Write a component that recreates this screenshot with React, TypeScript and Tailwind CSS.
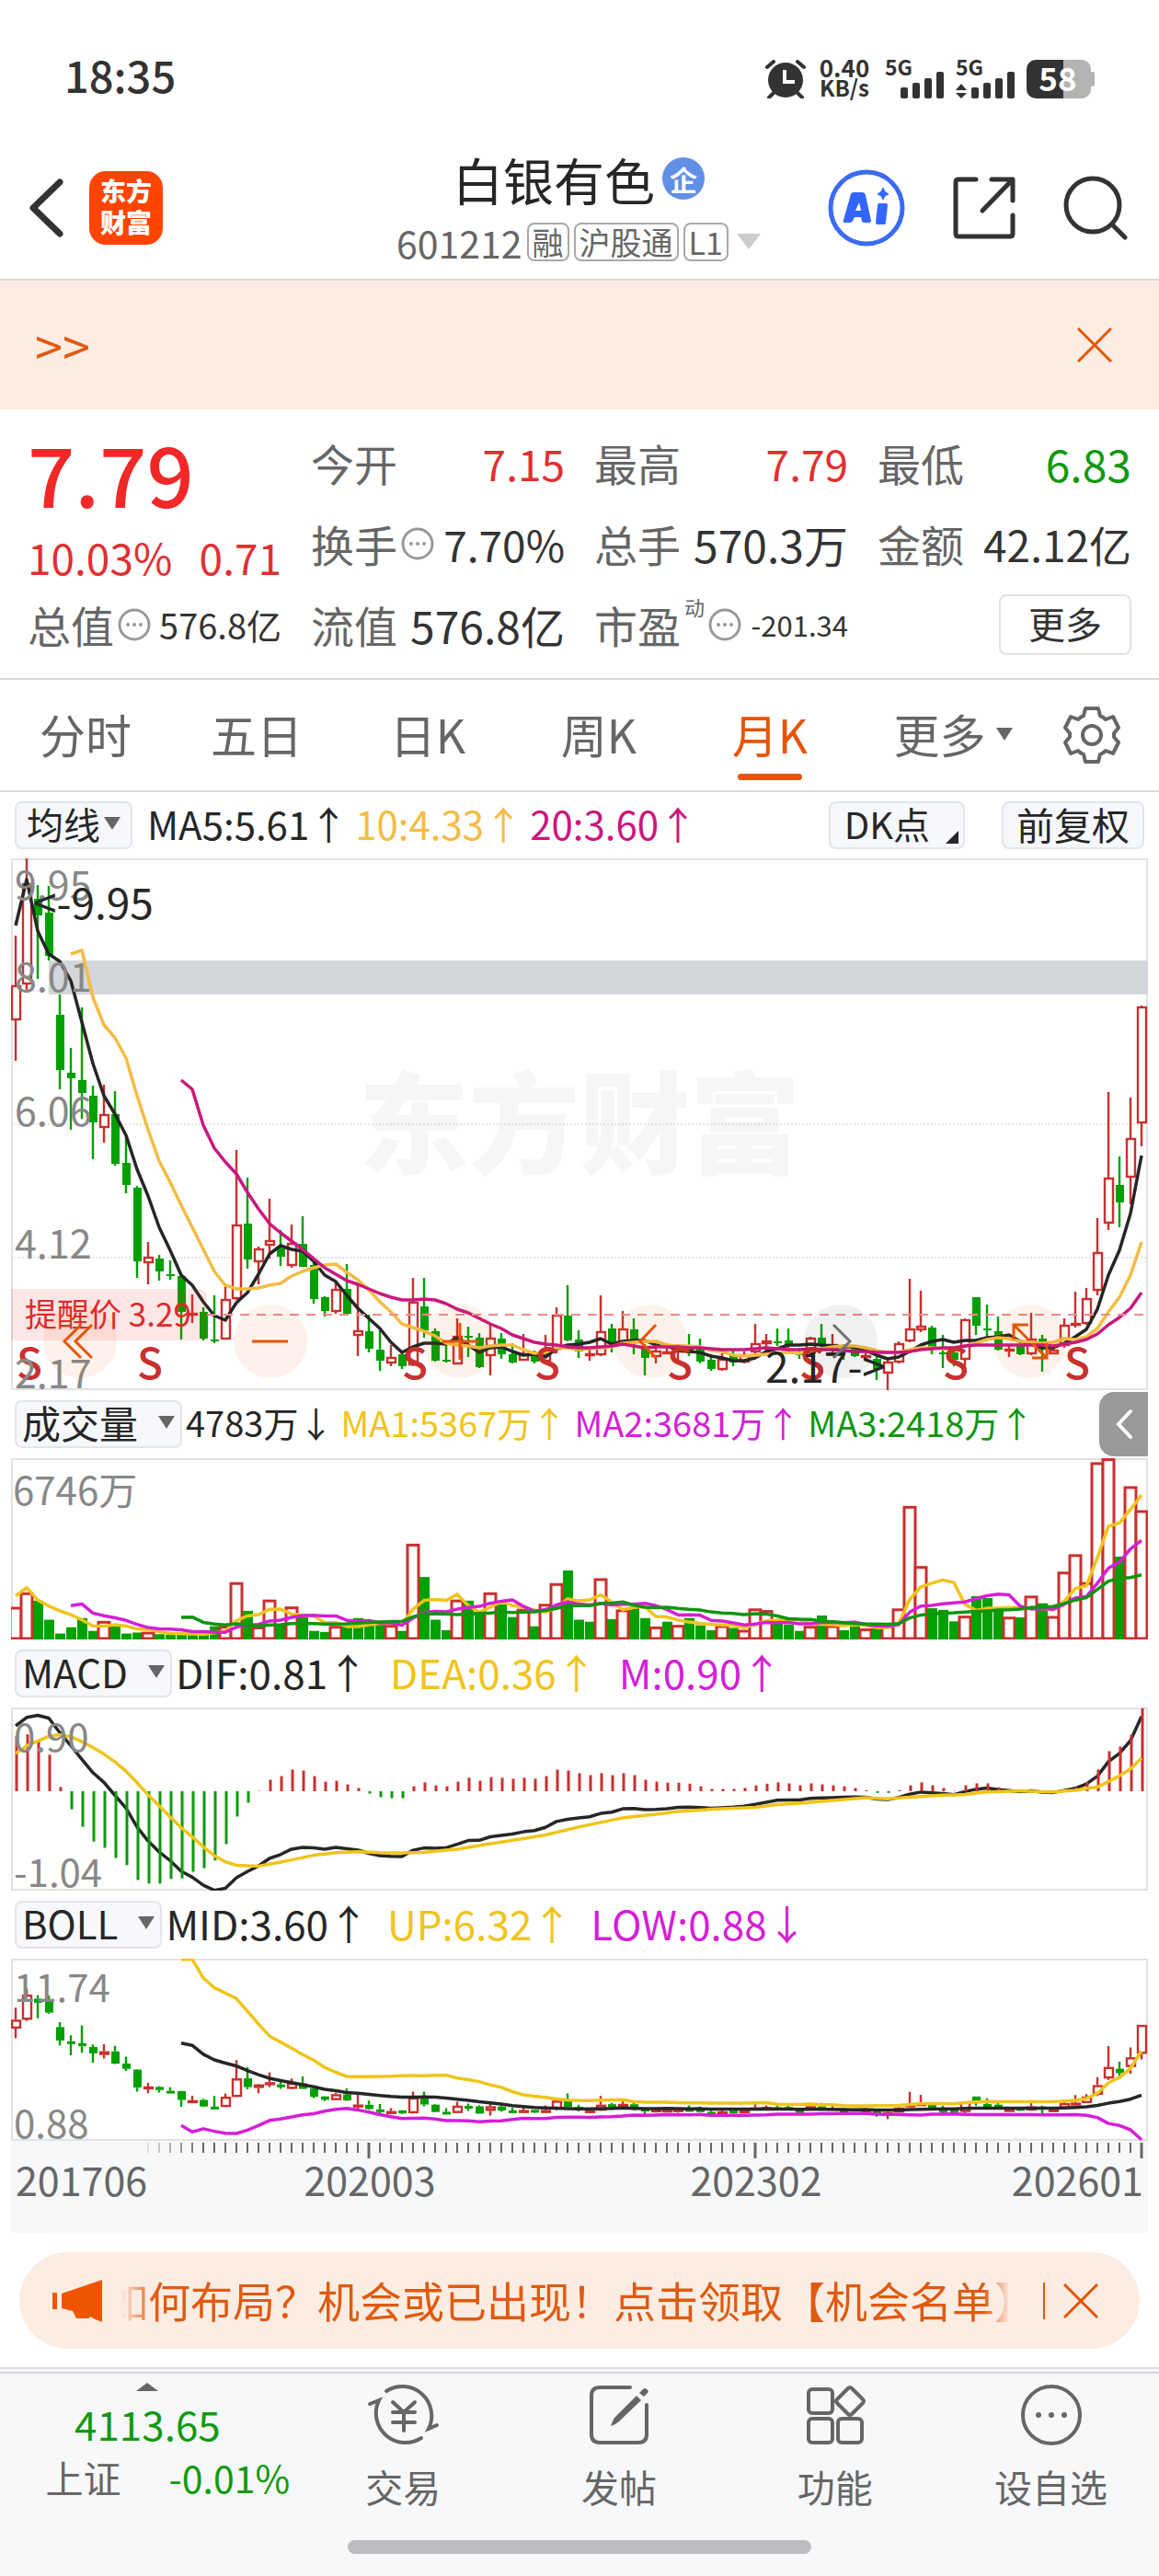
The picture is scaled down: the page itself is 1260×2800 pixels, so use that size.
import { useState } from 'react';
import type { ReactNode } from 'react';

const RED = '#c9302e';
const GREEN = '#00a000';
const BLACK = '#262626';
const YELLOW = '#f0c419';
const AMBER = '#f5bc42';
const MAGENTA = '#c9177e';
const PURPLE = '#d41fd8';
const DARK_GREEN = '#0f950f';
const ORANGE = '#e65505';

const CHART_W = 1236;
const STEP = 12;
const PRICE_H = 578;
const VOL_H = 197;
const MACD_H = 199;
const BOLL_H = 198;

// [high, body top, body bottom, low, 1 = up / 0 = down], 34 is the top of the pane and 1545 its bottom
const CANDLES: number[][] = [
  [254, 394, 494, 608, 1], [35, 104, 392, 408, 1], [110, 150, 197, 377, 0], [112, 187, 311, 325, 0],
  [421, 478, 634, 689, 0], [572, 643, 659, 806, 0], [458, 665, 700, 775, 0], [680, 709, 783, 889, 0],
  [678, 760, 800, 842, 1], [696, 760, 902, 908, 0], [822, 900, 962, 986, 0], [964, 971, 1179, 1225, 0],
  [1125, 1167, 1183, 1245, 1], [1162, 1171, 1207, 1235, 0], [1176, 1216, 1219, 1231, 0], [1218, 1220, 1322, 1402, 0],
  [1273, 1326, 1329, 1355, 1], [1309, 1322, 1398, 1405, 0], [1277, 1400, 1403, 1411, 0], [1247, 1286, 1402, 1402, 1],
  [862, 1074, 1286, 1290, 1], [942, 1071, 1174, 1199, 0], [1137, 1143, 1182, 1245, 1], [1001, 1118, 1135, 1172, 1],
  [1091, 1143, 1167, 1193, 0], [1074, 1126, 1192, 1198, 1], [1051, 1130, 1194, 1196, 0], [1182, 1190, 1285, 1299, 0],
  [1278, 1281, 1320, 1336, 0], [1240, 1257, 1323, 1328, 1], [1187, 1257, 1327, 1333, 0], [1247, 1376, 1391, 1448, 1],
  [1330, 1378, 1427, 1437, 0], [1370, 1431, 1461, 1490, 0], [1418, 1452, 1468, 1478, 1], [1440, 1443, 1477, 1484, 0],
  [1226, 1294, 1475, 1478, 1], [1226, 1307, 1375, 1395, 0], [1370, 1377, 1461, 1465, 0], [1418, 1459, 1464, 1467, 0],
  [1342, 1390, 1472, 1472, 1], [1364, 1391, 1395, 1450, 0], [1383, 1396, 1480, 1483, 0], [1358, 1396, 1447, 1503, 1],
  [1383, 1398, 1444, 1457, 0], [1412, 1443, 1466, 1469, 0], [1386, 1440, 1461, 1461, 1], [1432, 1437, 1464, 1470, 0],
  [1387, 1440, 1465, 1465, 1], [1311, 1331, 1430, 1440, 1], [1247, 1332, 1403, 1407, 0], [1376, 1402, 1436, 1454, 0],
  [1430, 1441, 1444, 1461, 1], [1277, 1378, 1445, 1447, 1], [1357, 1371, 1413, 1438, 0], [1321, 1369, 1408, 1412, 1],
  [1340, 1372, 1412, 1442, 0], [1415, 1423, 1453, 1504, 0], [1425, 1432, 1452, 1468, 1], [1412, 1434, 1437, 1443, 1],
  [1415, 1430, 1436, 1470, 1], [1386, 1428, 1432, 1449, 0], [1398, 1425, 1463, 1468, 0], [1444, 1460, 1484, 1490, 0],
  [1440, 1456, 1487, 1489, 1], [1430, 1446, 1467, 1478, 0], [1436, 1443, 1467, 1470, 1], [1358, 1411, 1438, 1442, 1],
  [1386, 1404, 1413, 1443, 1], [1370, 1406, 1410, 1420, 0], [1370, 1404, 1420, 1425, 0], [1425, 1440, 1444, 1457, 0],
  [1394, 1396, 1440, 1443, 1], [1356, 1396, 1420, 1425, 0], [1386, 1415, 1430, 1440, 1], [1415, 1433, 1437, 1458, 0],
  [1420, 1425, 1448, 1451, 0], [1440, 1446, 1450, 1460, 1], [1448, 1456, 1484, 1515, 0], [1460, 1464, 1497, 1546, 1],
  [1406, 1412, 1466, 1468, 1], [1228, 1369, 1406, 1408, 1], [1262, 1361, 1374, 1380, 1], [1362, 1367, 1421, 1442, 0],
  [1388, 1437, 1441, 1481, 0], [1432, 1437, 1458, 1476, 0], [1342, 1343, 1460, 1478, 1], [1281, 1282, 1361, 1388, 0],
  [1303, 1369, 1373, 1393, 0], [1336, 1377, 1430, 1432, 0], [1415, 1428, 1436, 1450, 1], [1400, 1415, 1443, 1446, 0],
  [1326, 1398, 1443, 1446, 1], [1387, 1398, 1430, 1494, 0], [1425, 1430, 1442, 1444, 1], [1342, 1360, 1420, 1424, 1],
  [1266, 1354, 1361, 1368, 1], [1256, 1284, 1357, 1360, 1], [1057, 1152, 1262, 1277, 1], [699, 941, 1072, 1091, 1],
  [880, 961, 1011, 1082, 0], [713, 830, 940, 1017, 1], [452, 454, 786, 852, 1],
];

// positive = up month, negative = down month; 550 is the top of the pane
const VOLUMES = [
  98, 142, -118, -60, -18, -37, -65, -26, 55, -40, -18, -21, 22, -16, -14, -14, -16, -18, -40, 40, 173, -87, 38, 120,
  -42, 99, -68, -26, -23, 40, -40, -65, -55, -45, 43, -26, 290, -190, -60, -28, 120, -118, -85, 142, -107, -68, 92, -40,
  107, 170, -210, -60, -54, 185, -62, 90, -95, -65, 38, -54, 43, -65, -43, -28, 42, -35, 28, 93, 88, -48, -45, -26, 40,
  -73, 42, -28, -42, 32, -38, 40, 93, 405, 222, -95, -90, -55, 71, -132, -126, -90, 68, -67, 132, -110, 70, 205, 258,
  173, 538, 550, -252, 465, 392,
];

const MACD = [
  168, 173, 156, 111, 13, -55, -108, -153, -172, -203, -225, -270, -281, -281, -267, -265, -245, -234, -211, -161, -77,
  -35, 1, 35, 46, 66, 63, 46, 29, 32, 21, 10, -7, -18, -21, -21, 15, 27, 18, 15, 29, 41, 32, 43, 41, 38, 41, 38, 46, 66,
  63, 55, 49, 55, 49, 55, 49, 35, 29, 26, 26, 23, 15, 7, 7, 7, 10, 18, 23, 27, 24, 18, 24, 21, 18, 15, 10, 3, -5, -5, 3,
  18, 27, 18, 10, 1, 18, 24, 24, 12, 4, -4, 2, -3, -4, 4, 12, 28, 66, 122, 136, 172, 253,
];

// [month index, value]
const DEA_KEYS = [
  [0, 115], [1, 138], [2, 153], [3, 167], [4, 172], [5, 166], [6, 151], [7, 133], [8, 113], [9, 89], [10, 61], [11, 26],
  [12, -11], [13, -44], [14, -78], [15, -111], [16, -139], [17, -169], [18, -196], [19, -215], [20, -225], [21, -227],
  [22, -228], [23, -222], [25, -209], [27, -195], [29, -187], [31, -184], [33, -187], [35, -188], [37, -186],
  [40, -176], [43, -160], [46, -144], [48, -133], [51, -109], [55, -81], [60, -62], [63, -55], [67, -49], [69, -41],
  [73, -31], [77, -20], [79, -23], [81, -18], [84, -12], [86, -10], [88, -2], [91, 1], [94, -2], [96, 3], [98, 13],
  [99, 29], [100, 47], [101, 68], [102, 101],
];

const xAt = (i: number) => 5 + STEP * i;
const priceY = (v: number) => Math.round(((v - 34) / 1511) * PRICE_H);
const toPrice = (v: number) => 9.95 - (v - 34) / 194.2;
const bollY = (p: number) => ((11.74 - p) / 10.86) * BOLL_H;
const volY = (v: number) => VOL_H - v / 2.8;
const macdY = (v: number) => 91 - v / 2.8;

const closes = CANDLES.map(c => (c[4] ? c[1] : c[2]));
const volumes = VOLUMES.map(Math.abs);

// lead holds the points whose window reaches back before the first month shown
function movingAverage(data: number[], size: number, lead: number[]): (number | null)[] {
  const start = size - 1 - lead.length;
  return data.map((_, i) => {
    if (i < start) return null;
    if (i < size - 1) return lead[i - start];
    return data.slice(i - size + 1, i + 1).reduce((a, b) => a + b, 0) / size;
  });
}

function interpolate(keys: number[][], length: number) {
  return Array.from({ length }, (_, i) => {
    const n = keys.findIndex(k => k[0] >= i);
    if (n <= 0) return keys[0][1];
    const [x0, y0] = keys[n - 1];
    const [x1, y1] = keys[n];
    return y0 + ((y1 - y0) * (i - x0)) / (x1 - x0);
  });
}

const ma5 = movingAverage(closes, 5, [224, 95, 240, 305]);
const ma10 = movingAverage(closes, 10, [305, 296, 430, 508]);
const ma20 = movingAverage(closes, 20, [664, 690, 793, 858]);

const bollMid = ma20.map(v => (v === null ? null : toPrice(v)));
const bollWidth = closes.map((_, i) => {
  if (i < 19) return 0;
  const win = closes.slice(i - 19, i + 1).map(toPrice);
  const mean = win.reduce((a, b) => a + b, 0) / 20;
  return 2 * Math.sqrt(win.reduce((a, b) => a + (b - mean) ** 2, 0) / 20);
});
const UP_LEAD = [11.7, 11.7, 10.6, 10.0];
const LOW_LEAD = [1.8, 1.42, 1.6, 1.45];
const bollUp = bollMid.map((m, i) => (m === null ? null : i < 19 ? UP_LEAD[i - 15] : m + bollWidth[i]));
const bollLow = bollMid.map((m, i) => (m === null ? null : i < 19 ? LOW_LEAD[i - 15] : m - bollWidth[i]));

const volMa5 = movingAverage(volumes, 5, [132, 158, 120, 102]);
const volMa10 = movingAverage(volumes, 10, [103, 108, 80, 72]);
const volMa20 = movingAverage(volumes, 20, [67, 68, 52, 47]);

const dea = interpolate(DEA_KEYS, MACD.length);
const dif = dea.map((d, i) => d + MACD[i] / 2);

function Line({ data, y, color }: { data: (number | null)[]; y: (v: number) => number; color: string }) {
  const points = data
    .map((v, i) => (v === null ? '' : `${xAt(i)},${y(v).toFixed(1)}`))
    .filter(Boolean)
    .join(' ');
  return <polyline points={points} fill="none" stroke={color} strokeWidth="3.5" strokeLinejoin="round" />;
}

function Candles({ y, min = 2 }: { y: (v: number) => number; min?: number }) {
  return (
    <>
      {CANDLES.map(([high, top, bottom, low, up], i) => {
        const x = xAt(i);
        const h = Math.max(y(bottom) - y(top), min);
        return (
          <g key={i} stroke={up ? RED : GREEN} strokeWidth="2.4">
            <path d={`M${x} ${y(high)}V${y(top)}M${x} ${y(bottom)}V${y(low)}`} />
            {up ? (
              <rect x={x - 4} y={y(top) + 1} width="9" height={Math.max(h - 2, 1)} fill="white" />
            ) : (
              <rect x={x - 4} y={y(top)} width="9" height={h} fill={GREEN} stroke="none" />
            )}
          </g>
        );
      })}
    </>
  );
}

function Chart({ height, label, children }: { height: number; label: string; children: ReactNode }) {
  return (
    <svg
      viewBox={`0 0 ${CHART_W} ${height}`}
      role="img"
      aria-label={label}
      className="block w-full h-auto font-['Noto_Sans_CJK_SC',sans-serif]"
    >
      <rect x="1" y="1" width={CHART_W - 2} height={height - 2} fill="none" stroke="#e2e2e2" strokeWidth="2" />
      {children}
    </svg>
  );
}

const S_MARKS = [20, 151, 439, 583, 727, 871, 1027, 1159];
const PRICE_LABELS: [string, number][] = [['9.95', 45], ['8.01', 145], ['6.06', 291], ['4.12', 435], ['2.17', 576]];

function PriceChart() {
  return (
    <Chart height={PRICE_H} label="月K线">
      <text x="618" y="334" textAnchor="middle" fill="#f6f6f6" className="text-[120px] font-black">东方财富</text>
      <path d="M0 144H1236M0 289H1236M0 434H1236" stroke="#c8c8c8" strokeWidth="1" strokeDasharray="2 2" />
      <rect x="41" y="111" width="1195" height="37" fill="#d3d7dc" />
      <Candles y={priceY} />
      <Line data={ma5} y={priceY} color={BLACK} />
      <Line data={ma10} y={priceY} color={AMBER} />
      <Line data={ma20} y={priceY} color={MAGENTA} />
      <path d="M213 496H1236" stroke="#f08a8a" strokeWidth="2" strokeDasharray="10 8" />
      <path d="M0 468H205a8 8 0 0 1 8 8V524H0Z" fill="#f23030" fillOpacity="0.12" />
      <text x="15" y="509" fill="#e02a2a" className="text-[35px]">提醒价 3.29</text>
      <g className="text-[46px] font-medium" fill={RED} textAnchor="middle">
        {S_MARKS.map(x => (
          <text key={x} x={x} y="566">S</text>
        ))}
      </g>
      <g fill="#888888" className="text-[43px]">
        {PRICE_LABELS.map(([text, y]) => (
          <text key={text} x="4" y={y}>{text}</text>
        ))}
      </g>
      <g fill={BLACK} className="text-[46px]">
        <text x="24" y="66">&lt;-9.95</text>
        <text x="820" y="570">2.17-&gt;</text>
      </g>
      <g fill={ORANGE} fillOpacity="0.08">
        {[75, 282, 488, 695, 1108].map(x => (
          <circle key={x} cx={x} cy="525" r="40" />
        ))}
        <circle cx="902" cy="525" r="40" fill="#000000" fillOpacity="0.06" />
      </g>
      <g fill="none" stroke={ORANGE} strokeWidth="3">
        <path d="M76 507L58 525L76 543M88 507L70 525L88 543" />
        <path d="M262 525H301" />
        <path d="M469 525H508M488 505V545" />
        <path d="M701 507L684 525L701 543" />
        <path d="M894 507L912 525L894 543" stroke="#707070" />
        <path d="M1106 507H1090V523M1090 507L1105 522M1110 543H1126V527M1126 543L1111 528" />
      </g>
    </Chart>
  );
}

function VolumeChart() {
  return (
    <Chart height={VOL_H} label="成交量">
      {VOLUMES.map((v, i) => {
        const y = volY(Math.abs(v));
        return v > 0 ? (
          <rect key={i} x={xAt(i) - 6} y={y + 1} width="12" height={VOL_H - y - 2} fill="white" stroke={RED} strokeWidth="3" />
        ) : (
          <rect key={i} x={xAt(i) - 5} y={y} width="11" height={VOL_H - y} fill={GREEN} />
        );
      })}
      <Line data={volMa5} y={volY} color={YELLOW} />
      <Line data={volMa10} y={volY} color={PURPLE} />
      <Line data={volMa20} y={volY} color={DARK_GREEN} />
      <text x="2" y="51" fill="#888888" className="text-[42px]">6746万</text>
    </Chart>
  );
}

function MacdChart() {
  return (
    <Chart height={MACD_H} label="MACD">
      <Line data={dif} y={macdY} color={BLACK} />
      {MACD.map((v, i) => (
        <path key={i} d={`M${xAt(i) + 1} 91V${macdY(v)}`} stroke={v > 0 ? RED : '#0a9a0a'} strokeWidth="3" />
      ))}
      <Line data={dea} y={macdY} color={YELLOW} />
      <g fill="#888888" className="text-[42px]">
        <text x="3" y="48">0.90</text>
        <text x="3" y="195">-1.04</text>
      </g>
    </Chart>
  );
}

function BollChart() {
  return (
    <Chart height={BOLL_H} label="BOLL">
      <Candles y={v => bollY(toPrice(v))} min={3} />
      <Line data={bollMid} y={bollY} color={BLACK} />
      <Line data={bollUp} y={bollY} color={YELLOW} />
      <Line data={bollLow} y={bollY} color={PURPLE} />
      <g fill="#888888" className="text-[42px]">
        <text x="3" y="47">11.74</text>
        <text x="3" y="195">0.88</text>
      </g>
    </Chart>
  );
}

function TimeAxis() {
  return (
    <svg viewBox="0 0 1236 100" className="block w-full h-auto bg-[#f7f8fa] font-['Noto_Sans_CJK_SC',sans-serif]">
      {CANDLES.map((_, i) => {
        if (i < 12) return null;
        const major = i === 32 || i === 67 || i === 102;
        return (
          <path
            key={i}
            d={`M${xAt(i)} 2V${major ? 19 : 13}`}
            stroke="#666666"
            strokeWidth={major ? 3 : 2}
            opacity={Math.min(1, (i - 11) / 6)}
          />
        );
      })}
      <g fill="#666666" className="text-[43px]">
        <text x="5" y="60">201706</text>
        <text x="390" y="60" textAnchor="middle">202003</text>
        <text x="810" y="60" textAnchor="middle">202302</text>
        <text x="1231" y="60" textAnchor="end">202601</text>
      </g>
    </svg>
  );
}

function Triangle({ className = '' }: { className?: string }) {
  return (
    <svg viewBox="0 0 18 14" className={`w-[18px] h-[14px] shrink-0 ${className}`} fill="currentColor" aria-hidden="true">
      <path d="M0 0H18L9 14Z" />
    </svg>
  );
}

function CloseIcon() {
  return (
    <svg viewBox="0 0 38 38" className="block w-[38px] h-[38px]" fill="none" stroke={ORANGE} strokeWidth="3">
      <path d="M1 1L37 37M37 1L1 37" />
    </svg>
  );
}

function IndicatorSelect({ label, options, tight }: { label: string; options: string[]; tight?: boolean }) {
  return (
    <label
      className={`flex h-[52px] shrink-0 items-center rounded-lg border-2 border-[#e2e5ea] bg-[#f6f8fb] pb-1 text-[#262626] ${
        tight ? 'gap-1 px-[11px] text-[40px]' : 'gap-[22px] px-[6px] text-[42px]'
      }`}
    >
      <select
        aria-label={label}
        defaultValue={options[0]}
        className="appearance-none field-sizing-content bg-transparent p-0 leading-[48px] outline-none"
      >
        {options.map(o => (
          <option key={o}>{o}</option>
        ))}
      </select>
      <Triangle className="text-[#666666]" />
    </label>
  );
}

function Values({ items, className }: { items: [string, string][]; className: string }) {
  return (
    <div className={`flex whitespace-nowrap pb-1 leading-[52px] ${className}`}>
      {items.map(([text, color]) => (
        <span key={text} style={{ color }}>{text}</span>
      ))}
    </div>
  );
}

function Signal({ className, arrows }: { className: string; arrows?: boolean }) {
  return (
    <div className={`relative h-[42px] w-[65px] ${className}`}>
      <svg viewBox="0 0 65 42" className="absolute inset-0" fill="#333" aria-hidden="true">
        <rect x="17" y="30" width="8" height="12" rx="2" />
        <rect x="30" y="25" width="8" height="17" rx="2" />
        <rect x="43" y="20" width="8" height="22" rx="2" />
        <rect x="56" y="13" width="8" height="29" rx="2" />
        {arrows && <path d="M0 33L6 26L12 33ZM0 36L6 42L12 36Z" />}
      </svg>
      <span className="absolute left-0 top-0 text-[23px] leading-[15px] font-bold">5G</span>
    </div>
  );
}

function StatusBar() {
  return (
    <div className="flex h-[148px] items-start justify-between pl-[70px] pr-[70px] pt-[62px] text-[#333333]">
      <span className="text-[47px] leading-[38px] font-medium">18:35</span>
      <div className="flex items-center">
        <svg viewBox="0 0 44 42" className="w-11 h-[42px]" aria-hidden="true">
          <circle cx="22" cy="22" r="19" fill="#333" />
          <path d="M2 8L9 2M42 8L35 2M4 41L10 35M40 41L34 35" stroke="#333" strokeWidth="4" strokeLinecap="round" />
          <path d="M21 11V24H32" fill="none" stroke="white" strokeWidth="4" />
        </svg>
        <div className="ml-[14px] w-[56px] pb-1 text-center text-[26px] leading-[22px] font-bold">
          <div>0.40</div>
          <div className="text-[24px]">KB/s</div>
        </div>
        <Signal className="ml-4" />
        <Signal className="ml-3" arrows />
        <div className="relative ml-3 flex h-[42px] w-[74px] items-center">
          <svg viewBox="0 0 74 42" className="absolute inset-0" aria-hidden="true">
            <path d="M10 0H60a10 10 0 0 1 10 10V13h2a2 2 0 0 1 2 2V27a2 2 0 0 1-2 2h-2V32a10 10 0 0 1-10 10H10Z" fill="#b3b3b3" />
            <path d="M10 0H40V42H10A10 10 0 0 1 0 32V10A10 10 0 0 1 10 0Z" fill="#333" />
          </svg>
          <span className="relative w-[68px] pb-1 text-center text-[35px] leading-[38px] font-bold text-white">58</span>
        </div>
      </div>
    </div>
  );
}

function Tag({ children }: { children: ReactNode }) {
  return (
    <span className="flex h-[42px] items-center rounded-lg border-2 border-[#a8a8a8] px-1 text-[34px] leading-[38px] text-[#666666]">
      {children}
    </span>
  );
}

function Header() {
  return (
    <header className="grid h-[157px] grid-cols-[1fr_auto_1fr] items-center border-b-2 border-[#d9d9d9] pl-8 pr-[34px]">
      <div className="flex items-center gap-7">
        <button aria-label="返回">
          <svg viewBox="0 0 37 64" className="block w-[37px] h-16" fill="none" stroke="#333" strokeWidth="7" strokeLinecap="round" strokeLinejoin="round">
            <path d="M33 4L4 32L33 60" />
          </svg>
        </button>
        <a
          href="#home"
          className="flex h-20 w-20 flex-col items-center justify-center rounded-[18px] bg-[#ff4400] pb-1 text-[28px] leading-[34px] font-black text-white"
        >
          <span>东方</span>
          <span>财富</span>
        </a>
      </div>
      <div className="flex flex-col items-center gap-[18px] pb-1">
        <h1 className="flex items-center gap-2 text-[55px] leading-[60px] text-[#262626]">
          白银有色
          <span className="flex h-[46px] w-[46px] items-center justify-center rounded-full bg-[#628fe6] text-[30px] leading-[44px] font-bold text-white">
            企
          </span>
        </h1>
        <div className="flex items-center gap-[5px]">
          <span className="text-[41px] leading-[42px] text-[#666666]">601212</span>
          <Tag>融</Tag>
          <Tag>沪股通</Tag>
          <Tag>L1</Tag>
          <svg viewBox="0 0 26 17" className="ml-1 w-[26px] h-[17px]" fill="#cccccc" aria-hidden="true">
            <path d="M0 0H26L13 17Z" />
          </svg>
        </div>
      </div>
      <div className="flex items-center justify-end gap-[51px]">
        <button aria-label="Ai">
          <svg viewBox="0 0 84 84" className="block w-[84px] h-[84px]" fill="none" stroke="#3b6af5">
            <circle cx="42" cy="42" r="39" strokeWidth="5" />
            <path d="M28 25H37Q40 25 41 28L47 56Q47 58 45 58H39Q37 58 37 56L36 52H29L27 56Q26 58 24 58H18Q16 58 17 55L25 27Q26 25 28 25ZM34 36L30 45H36Z" fill="#3366ff" fillRule="evenodd" stroke="none" />
            <path d="M56 37H63Q65 37 65 39L63 58Q63 60 61 60H54Q52 60 52 58L54 39Q54 37 56 37Z" fill="#3366ff" stroke="none" />
            <path d="M60 20Q61 25 66 27Q61 28 60 33Q59 28 54 27Q59 25 60 20Z" fill="#3366ff" stroke="#3366ff" strokeWidth="1" />
          </svg>
        </button>
        <button aria-label="分享">
          <svg viewBox="0 0 70 70" className="block w-[70px] h-[70px]" fill="none" stroke="#333" strokeWidth="5" strokeLinecap="round" strokeLinejoin="round">
            <path d="M26 4H7Q4 4 4 7V63Q4 66 7 66H63Q66 66 66 63V43" />
            <path d="M43 4H66V27M66 4L33 38" />
          </svg>
        </button>
        <button aria-label="搜索">
          <svg viewBox="0 0 70 70" className="block w-[70px] h-[70px]" fill="none" stroke="#333" strokeWidth="5" strokeLinecap="round">
            <circle cx="32" cy="32" r="29" />
            <path d="M53 53L67 67" />
          </svg>
        </button>
      </div>
    </header>
  );
}

function Info({ name }: { name: string }) {
  return (
    <button aria-label={`${name}说明`} className="ml-1 shrink-0">
      <svg viewBox="0 0 36 36" className="block w-9 h-9" fill="none" stroke="#999999" strokeWidth="3">
        <circle cx="18" cy="18" r="16" />
        <g fill="#999999" stroke="none">
          <circle cx="11" cy="18" r="2" />
          <circle cx="18" cy="18" r="2" />
          <circle cx="25" cy="18" r="2" />
        </g>
      </svg>
    </button>
  );
}

interface StatProps {
  name: string;
  value: string;
  sup?: string;
  info?: boolean;
  className?: string;
}

function Stat({ name, value, sup, info, className = 'text-[48px] text-[#333333]' }: StatProps) {
  return (
    <div className="flex h-[88px] items-center justify-between whitespace-nowrap pb-1">
      <dt className="flex items-center text-[47px] leading-[56px] text-[#666666]">
        {name}
        {sup && <span className="mb-10 ml-1 text-[22px] leading-6">{sup}</span>}
        {info && <Info name={name} />}
      </dt>
      <dd className={`leading-[56px] ${className}`}>{value}</dd>
    </div>
  );
}

function Quote() {
  return (
    <dl className="grid grid-cols-4 gap-x-8 border-b-2 border-[#d9d9d9] px-[30px] pt-4 pb-3">
      <div className="row-span-2 text-[#e03030]">
        <div className="pt-1 text-[90px] leading-[96px] font-medium text-[#f22828]">7.79</div>
        <div className="flex justify-between pt-4 text-[46px] leading-[56px]">
          <span>10.03%</span>
          <span>0.71</span>
        </div>
      </div>
      <Stat name="今开" value="7.15" className="text-[46px] text-[#e03030]" />
      <Stat name="最高" value="7.79" className="text-[46px] text-[#e03030]" />
      <Stat name="最低" value="6.83" className="text-[48px] text-[#0f9a0f]" />
      <Stat name="换手" value="7.70%" info className="text-[46px] text-[#333333]" />
      <Stat name="总手" value="570.3万" />
      <Stat name="金额" value="42.12亿" className="text-[46px] text-[#333333]" />
      <Stat name="总值" value="576.8亿" info className="text-[38px] text-[#333333]" />
      <Stat name="流值" value="576.8亿" />
      <Stat name="市盈" value="-201.34" sup="动" info className="text-[31px] text-[#333333]" />
      <div className="flex items-center justify-end pb-1">
        <button className="h-[66px] w-36 rounded-lg border-2 border-[#e2e2e2] pb-1 text-[40px] leading-[56px] text-[#333333]">更多</button>
      </div>
    </dl>
  );
}

const TABS = ['分时', '五日', '日K', '周K', '月K'];

function PeriodTabs() {
  const [active, setActive] = useState('月K');
  return (
    <nav className="grid h-[122px] grid-cols-[repeat(5,186fr)_212fr_90fr] border-b-2 border-[#d9d9d9] pr-7 text-[50px] text-[#666666]">
      {TABS.map(tab => (
        <button
          key={tab}
          onClick={() => setActive(tab)}
          className={`flex flex-col items-center pt-7 leading-[60px] ${tab === active ? 'text-[#e65505]' : ''}`}
        >
          {tab}
          {tab === active && <span className="mt-[14px] h-[7px] w-[70px] rounded-full bg-[#e65505]" />}
        </button>
      ))}
      <button className="flex items-start justify-center gap-[11px] pt-7 leading-[60px]">
        更多
        <Triangle className="mt-6" />
      </button>
      <button aria-label="设置" className="flex items-center justify-center">
        <svg viewBox="0 0 62 62" className="w-[62px] h-[62px]" fill="none" stroke="currentColor" strokeWidth="4" strokeLinejoin="round">
          <path d="M24 2H38L40 10Q43 11 46 14L54 11L60 23L55 29V33L60 39L54 51L46 48Q43 51 40 52L38 60H24L22 52Q19 51 16 48L8 51L2 39L7 33V29L2 23L8 11L16 14Q19 11 22 10Z" />
          <circle cx="31" cy="31" r="10" />
        </svg>
      </button>
    </nav>
  );
}

function Promo() {
  return (
    <aside className="mx-[21px] mt-[21px] flex h-[105px] items-center rounded-full bg-[#fcede3] pl-9 pr-[45px] text-[#e05a10]">
      <svg viewBox="0 0 54 46" className="w-[54px] h-[46px] shrink-0" fill="#ee5500" aria-hidden="true">
        <path d="M0 14H5V32H0ZM10 15L54 0V46L44 42V41L40 40V42H30L26 42L22 34L10 31Z" />
      </svg>
      <a
        href="#promo"
        className="ml-5 w-0 flex-1 overflow-hidden pb-1 text-[46px] leading-[60px] whitespace-nowrap [mask-image:linear-gradient(90deg,transparent,black_4%,black_97%,transparent)]"
      >
        <span className="-ml-4">如何布局？机会或已出现！点击领取【机会名单】</span>
      </a>
      <span className="ml-9 h-10 w-[2px] shrink-0 bg-[#e65505]" />
      <button aria-label="关闭" className="ml-5 shrink-0">
        <CloseIcon />
      </button>
    </aside>
  );
}

const NAV: { label: string; icon: ReactNode }[] = [
  {
    label: '交易',
    icon: (
      <>
        <path d="M15 7A32 32 0 0 1 61 48L70 44M53 58A32 32 0 0 1 7 17L-3 21" />
        <path d="M22 19L34 30L46 19M34 30V50M22 30H46M22 41H46" />
      </>
    ),
  },
  {
    label: '发帖',
    icon: (
      <>
        <path d="M45 3H12Q3 3 3 12V54Q3 63 12 63H54Q63 63 63 54V22" />
        <path d="M52 12L57 17L33 40Q30 43 24 45Q26 39 28 36ZM55 9L59 5Q61 3 63 5Q66 7 64 9L60 13Z" fill="#666666" stroke="none" />
      </>
    ),
  },
  {
    label: '功能',
    icon: (
      <>
        <rect x="4" y="5" width="26" height="26" rx="4" />
        <rect x="4" y="37" width="26" height="26" rx="4" />
        <rect x="36" y="37" width="26" height="26" rx="4" />
        <path d="M47 4Q49 2 51 4L63 16Q65 18 63 20L51 32Q49 34 47 32L35 20Q33 18 35 16Z" />
      </>
    ),
  },
  {
    label: '设自选',
    icon: (
      <>
        <circle cx="33" cy="33" r="31" />
        <g fill="#666666" stroke="none">
          <circle cx="19" cy="33" r="3" />
          <circle cx="33" cy="33" r="3" />
          <circle cx="47" cy="33" r="3" />
        </g>
      </>
    ),
  },
];

function BottomNav() {
  return (
    <footer className="mt-5 border-t-2 border-[#dddddd] pt-[3px]">
      <div className="border-t-2 border-[#d0d4d9] bg-[#f7f8fa] pb-7">
        <div className="grid grid-cols-[321fr_235fr_235fr_235fr_235fr] text-[#666666]">
          <a href="#index" className="flex flex-col items-center pt-[10px]">
            <svg viewBox="0 0 24 9" className="w-6 h-[9px]" fill="currentColor" aria-hidden="true">
              <path d="M12 0L24 9H0Z" />
            </svg>
            <span className="mt-[6px] text-[44px] leading-[58px] text-[#0f9a0f]">4113.65</span>
            <span className="flex gap-[52px] pl-11 text-[41px] leading-[58px]">
              上证<span className="text-[#0f9a0f]">-0.01%</span>
            </span>
          </a>
          {NAV.map(item => (
            <button key={item.label} className="flex flex-col items-center gap-4 pt-3">
              <svg viewBox="0 0 66 66" className="w-[66px] h-[66px] overflow-visible" fill="none" stroke="#666666" strokeWidth="4" strokeLinecap="round" aria-hidden="true">
                {item.icon}
              </svg>
              <span className="text-[41px] leading-[56px]">{item.label}</span>
            </button>
          ))}
        </div>
        <div className="mx-auto mt-[31px] h-[15px] w-2/5 rounded-full bg-[#bcbdc0]" />
      </div>
    </footer>
  );
}

export default function App() {
  return (
    <div className="bg-white font-['Noto_Sans_CJK_SC',sans-serif]">
      <StatusBar />
      <Header />
      <div className="flex h-[140px] items-center justify-between bg-[#fcede3] pl-[38px] pr-[51px]">
        <a href="#notice" className="text-[54px] leading-[56px] text-[#e05a10]">&gt;&gt;</a>
        <button aria-label="关闭">
          <CloseIcon />
        </button>
      </div>
      <Quote />
      <PeriodTabs />

      <main className="px-3">
        <div className="flex h-[72px] items-center pl-1">
          <IndicatorSelect label="主图指标" options={['均线', 'BOLL']} tight />
          <Values
            className="ml-4 gap-2 text-[42px]"
            items={[['MA5:5.61↑', BLACK], ['10:4.33↑', AMBER], ['20:3.60↑', MAGENTA]]}
          />
          <button className="relative ml-auto h-[52px] rounded-lg border-2 border-[#e2e5ea] bg-[#f6f8fb] pl-[15px] pr-9 pb-1 text-[40px] leading-[44px] text-[#262626]">
            DK点
            <svg viewBox="0 0 14 14" className="absolute right-[5px] bottom-1 w-[14px] h-[14px]" aria-hidden="true">
              <path d="M14 0V14H0Z" fill="#262626" />
            </svg>
          </button>
          <button className="ml-10 mr-1 h-[52px] rounded-lg border-2 border-[#e2e5ea] bg-[#f6f8fb] px-[14px] pb-1 text-[41px] leading-[44px] text-[#262626]">
            前复权
          </button>
        </div>
        <PriceChart />

        <div className="flex h-[74px] items-center pl-1">
          <IndicatorSelect label="副图指标一" options={['成交量', '成交额']} />
          <Values
            className="ml-1 gap-2 text-[38px]"
            items={[['4783万↓', BLACK], ['MA1:5367万↑', YELLOW], ['MA2:3681万↑', PURPLE], ['MA3:2418万↑', DARK_GREEN]]}
          />
          <button aria-label="展开" className="ml-auto flex h-[70px] w-[53px] items-center justify-center rounded-l-2xl bg-[#999999]">
            <svg viewBox="0 0 20 34" className="w-5 h-[34px]" fill="none" stroke="white" strokeWidth="4" strokeLinecap="round">
              <path d="M17 3L4 17L17 31" />
            </svg>
          </button>
        </div>
        <VolumeChart />

        <div className="flex h-[74px] items-center pl-1">
          <IndicatorSelect label="副图指标二" options={['MACD', 'KDJ']} />
          <Values
            className="ml-1 gap-6 text-[44px]"
            items={[['DIF:0.81↑', BLACK], ['DEA:0.36↑', YELLOW], ['M:0.90↑', PURPLE]]}
          />
        </div>
        <MacdChart />

        <div className="flex h-[74px] items-center pl-1">
          <IndicatorSelect label="副图指标三" options={['BOLL', 'RSI']} />
          <Values
            className="ml-1 gap-5 text-[44px]"
            items={[['MID:3.60↑', BLACK], ['UP:6.32↑', YELLOW], ['LOW:0.88↓', PURPLE]]}
          />
        </div>
        <BollChart />
        <TimeAxis />
      </main>

      <Promo />
      <BottomNav />
    </div>
  );
}
